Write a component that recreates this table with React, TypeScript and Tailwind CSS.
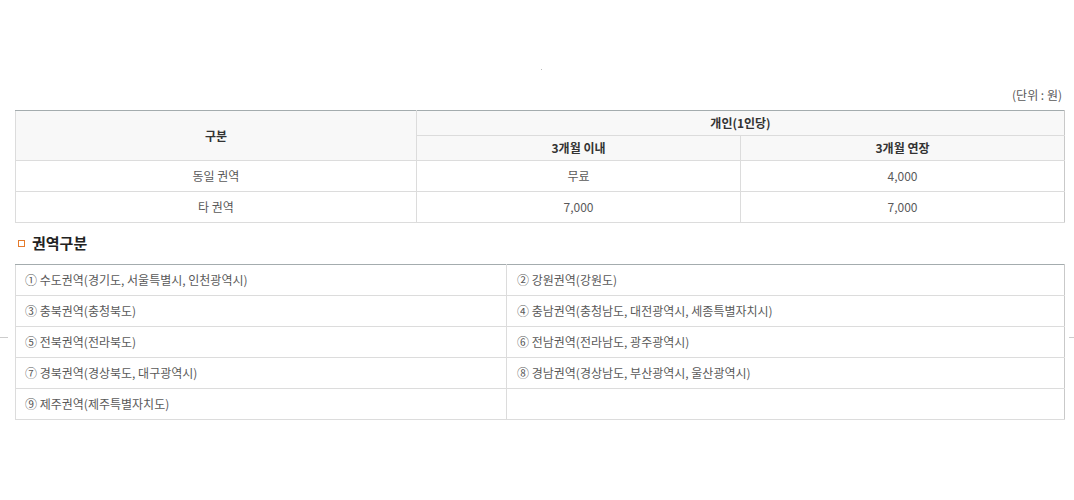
const font = { fontFamily: '"Noto Sans CJK KR", "Noto Sans", sans-serif' };

const regions: [string, string][] = [
  ['① 수도권역(경기도, 서울특별시, 인천광역시)', '② 강원권역(강원도)'],
  ['③ 충북권역(충청북도)', '④ 충남권역(충청남도, 대전광역시, 세종특별자치시)'],
  ['⑤ 전북권역(전라북도)', '⑥ 전남권역(전라남도, 광주광역시)'],
  ['⑦ 경북권역(경상북도, 대구광역시)', '⑧ 경남권역(경상남도, 부산광역시, 울산광역시)'],
  ['⑨ 제주권역(제주특별자치도)', ''],
];

export default function App() {
  return (
    <div className="relative w-[1074px] h-[500px] bg-white text-[#595959]" style={font}>
      {/* stray marks from the source page */}
      <span className="absolute left-[541px] top-[69px] w-px h-px bg-[#bbb]" />
      <span className="absolute left-0 top-[337px] w-[8px] h-px bg-[#ccc]" />
      <span className="absolute left-[1069px] top-[337px] w-[5px] h-px bg-[#ccc]" />

      <div className="pl-[15px] pr-[10px] pt-[86px]">
        <div className="w-[1049px] text-right text-[12px] leading-[18px] pr-[2px]">(단위 : 원)</div>

        <table className="mt-[6px] w-[1049px] table-fixed border-collapse text-[12px] border-t border-t-[#a4acae]">
          <colgroup>
            <col className="w-[401px]" />
            <col className="w-[324px]" />
            <col className="w-[324px]" />
          </colgroup>
          <thead>
            <tr className="h-[25px] bg-[#f8f8f8]">
              <th rowSpan={2} className="border border-[#dcdcdc] border-t-[#a4acae] font-bold text-[#333]">구분</th>
              <th colSpan={2} className="border border-[#dcdcdc] border-t-[#a4acae] border-r-[#c9c9c9] font-bold text-[#333]">개인(1인당)</th>
            </tr>
            <tr className="h-[25px] bg-[#f8f8f8]">
              <th className="border border-[#dcdcdc] font-bold text-[#333]">3개월 이내</th>
              <th className="border border-[#dcdcdc] border-r-[#c9c9c9] font-bold text-[#333]">3개월 연장</th>
            </tr>
          </thead>
          <tbody>
            <tr className="h-[31px]">
              <td className="border border-[#dcdcdc] text-center">동일 권역</td>
              <td className="border border-[#dcdcdc] text-center">무료</td>
              <td className="border border-[#dcdcdc] border-r-[#c9c9c9] text-center">4,000</td>
            </tr>
            <tr className="h-[31px]">
              <td className="border border-[#dcdcdc] text-center">타 권역</td>
              <td className="border border-[#dcdcdc] text-center">7,000</td>
              <td className="border border-[#dcdcdc] border-r-[#c9c9c9] text-center">7,000</td>
            </tr>
          </tbody>
        </table>

        {/* 권역구분 */}
        <h3 className="mt-[10px] flex items-center gap-[7px] pl-[3px] h-[20px]">
          <span className="w-[7px] h-[7px] border-[1.5px] border-[#e57b2c]" />
          <span className="text-[15px] font-bold text-[#222] leading-[20px]">권역구분</span>
        </h3>

        <table className="mt-[11px] w-[1049px] table-fixed border-collapse text-[12px] border-t border-t-[#a4acae]">
          <colgroup>
            <col className="w-[491px]" />
            <col className="w-[558px]" />
          </colgroup>
          <tbody>
            {regions.map(([a, b], i) => (
              <tr key={i} className="h-[31px]">
                <td className={`border border-[#dcdcdc] pl-[9px] ${i === 0 ? 'border-t-[#a4acae]' : ''}`}>{a}</td>
                <td className={`border border-[#dcdcdc] border-r-[#c9c9c9] pl-[10px] ${i === 0 ? 'border-t-[#a4acae]' : ''}`}>{b}</td>
              </tr>
            ))}
          </tbody>
        </table>
      </div>
    </div>
  );
}
